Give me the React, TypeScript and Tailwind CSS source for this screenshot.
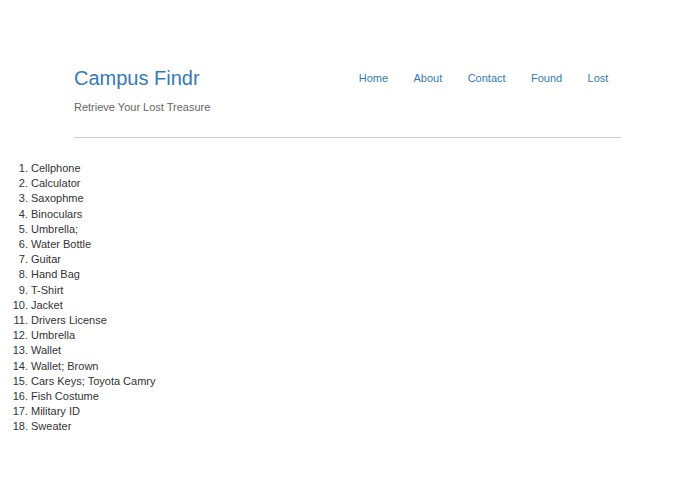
import React from 'react';

const items = [
  'Cellphone',
  'Calculator',
  'Saxophme',
  'Binoculars',
  'Umbrella;',
  'Water Bottle',
  'Guitar',
  'Hand Bag',
  'T-Shirt',
  'Jacket',
  'Drivers License',
  'Umbrella',
  'Wallet',
  'Wallet; Brown',
  'Cars Keys; Toyota Camry',
  'Fish Costume',
  'Military ID',
  'Sweater',
];

const links = ['Home', 'About', 'Contact', 'Found', 'Lost'];

export default function App() {
  return (
    <div className="min-h-screen bg-white pt-[66px] font-['Liberation_Sans',Arial,sans-serif]">
      <div className="mx-auto w-[547px]">
        <div className="flex justify-between">
          <div>
            <h1 className="text-[20px] leading-[24px] text-[#337ab7]">Campus Findr</h1>
            <p className="mt-[10px] text-[11px] leading-[15px] font-medium text-[#666]">
              Retrieve Your Lost Treasure
            </p>
          </div>
          <nav className="mt-[4.5px] flex">
            {links.map((l) => (
              <a key={l} href="#" className="px-[12.7px] text-[11px] leading-[15px] text-[#337ab7]">
                {l}
              </a>
            ))}
          </nav>
        </div>
        <hr className="mt-[22px] border-t border-[#cccccc]" />
      </div>
      <ol className="mt-[23px] list-decimal pl-[31px] text-[11px] leading-[15.2px] text-[#333]">
        {items.map((it, i) => (
          <li key={i}>{it}</li>
        ))}
      </ol>
    </div>
  );
}
